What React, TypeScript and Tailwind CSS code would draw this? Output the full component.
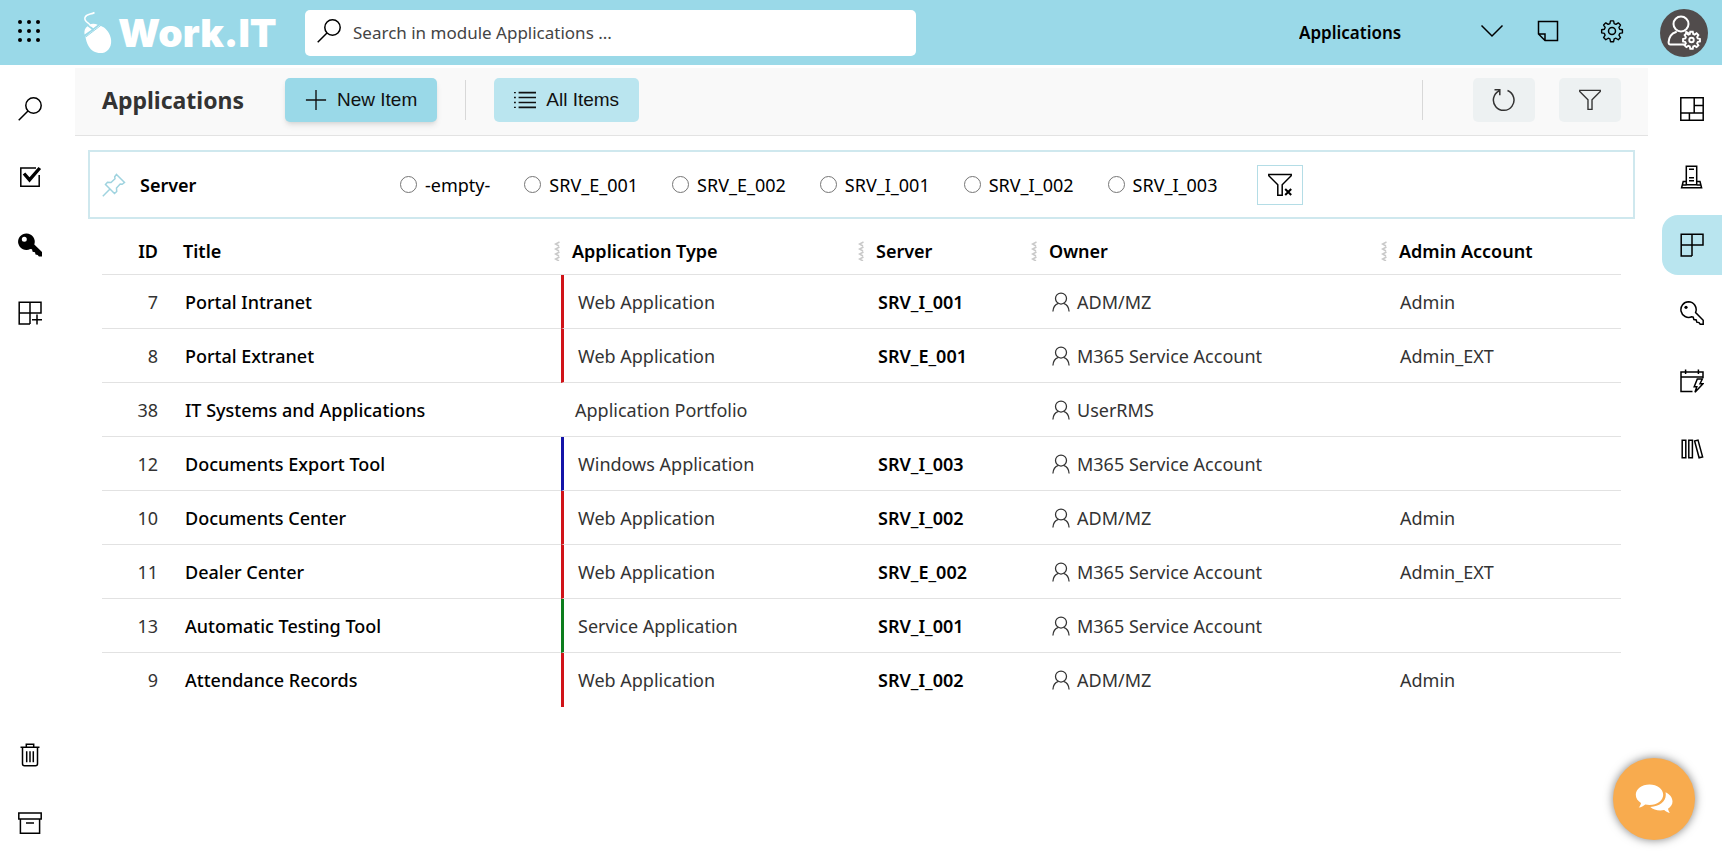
import { useState } from "react";
import type { ReactNode } from "react";
import clsx from "clsx";

type AppRow = {
  id: number;
  title: string;
  type: string;
  server: string;
  owner: string;
  admin: string;
};

const ROWS: AppRow[] = [
  { id: 7, title: "Portal Intranet", type: "Web Application", server: "SRV_I_001", owner: "ADM/MZ", admin: "Admin" },
  { id: 8, title: "Portal Extranet", type: "Web Application", server: "SRV_E_001", owner: "M365 Service Account", admin: "Admin_EXT" },
  { id: 38, title: "IT Systems and Applications", type: "Application Portfolio", server: "", owner: "UserRMS", admin: "" },
  { id: 12, title: "Documents Export Tool", type: "Windows Application", server: "SRV_I_003", owner: "M365 Service Account", admin: "" },
  { id: 10, title: "Documents Center", type: "Web Application", server: "SRV_I_002", owner: "ADM/MZ", admin: "Admin" },
  { id: 11, title: "Dealer Center", type: "Web Application", server: "SRV_E_002", owner: "M365 Service Account", admin: "Admin_EXT" },
  { id: 13, title: "Automatic Testing Tool", type: "Service Application", server: "SRV_I_001", owner: "M365 Service Account", admin: "" },
  { id: 9, title: "Attendance Records", type: "Web Application", server: "SRV_I_002", owner: "ADM/MZ", admin: "Admin" },
];

const TYPE_BORDER: Record<string, string> = {
  "Web Application": "border-l-3 border-l-[#d01318]",
  "Windows Application": "border-l-3 border-l-[#1414a8]",
  "Service Application": "border-l-3 border-l-[#0c7d1c]",
};

const SERVERS = ["-empty-", "SRV_E_001", "SRV_E_002", "SRV_I_001", "SRV_I_002", "SRV_I_003"];

function Icon({ children, className = "size-6" }: { children: ReactNode; className?: string }) {
  return (
    <svg
      viewBox="0 0 24 24"
      fill="none"
      stroke="currentColor"
      strokeWidth="1.5"
      className={clsx("shrink-0", className)}
      aria-hidden
    >
      {children}
    </svg>
  );
}

function SearchIcon() {
  return (
    <Icon>
      <circle cx="15.5" cy="8.5" r="7.7" />
      <path d="M10 14 0.7 23.3" />
    </Icon>
  );
}

function TaskIcon() {
  return (
    <Icon>
      <path d="M18 3H2.8v18.2h18.4V10" />
      <path d="m6 8.5 5.5 6.3L21.8 3" strokeWidth="3.4" />
    </Icon>
  );
}

function SolidKeyIcon() {
  return (
    <Icon>
      <path
        d="M8.6.5a8.2 8.2 0 1 0 3.6 15.4l1.8.4.6 2.4 2.4.5.5 2.3 2.2.5 1.2 1.6h3.4v-4.4l-8-7.8A8.2 8.2 0 0 0 8.6.5ZM6.3 3.8a2.5 2.5 0 1 1 0 5 2.5 2.5 0 0 1 0-5Z"
        fill="currentColor"
        fillRule="evenodd"
        stroke="none"
      />
    </Icon>
  );
}

function AddBlockIcon() {
  return (
    <Icon>
      <path d="M12 23H1.2V1.2H23v10.9H1.2M12 1.2V23M19 13.5v10M14 18.7h10" />
    </Icon>
  );
}

function TrashIcon() {
  return (
    <Icon>
      <path d="M2.5 4.2h19M8.3 4V1.2h7.4V4M4.5 4.5v16.3a2 2 0 0 0 2 2h11a2 2 0 0 0 2-2V4.5M8.7 8.2v11M12 8.2v11M15.3 8.2v11" />
    </Icon>
  );
}

function ArchiveIcon() {
  return (
    <Icon>
      <path d="M.8 2h22.4v6H.8zM2.4 8v14.3h19.2V8M8 12h8" />
    </Icon>
  );
}

function DashboardIcon() {
  return (
    <Icon>
      <path d="M.8.8h22.4v22.4H.8zM14.2.8v15.3M.8 16.1h22.4M14.2 8.4h9M9.4 16.1v7.1" />
    </Icon>
  );
}

function ServerIcon() {
  return (
    <Icon>
      <path d="M6.3 1.3h10.4v18.4H6.3zM9 4.3h5M9 12.7h5M9 15.8h5M6 16.5H3.2L1.6 22.7h20L20 16.5h-3M2.2 20h4.4M16.7 20H21" />
    </Icon>
  );
}

function BlocksIcon() {
  return (
    <Icon>
      <path d="M12 23H1.2V1.2H23v10.9H1.2M12 1.2V23" />
    </Icon>
  );
}

function KeyIcon() {
  return (
    <Icon>
      <path d="M8.5.8a7.8 7.8 0 1 0 3.2 15l1.5.4.7 2.3 2.3.4.6 2.3 2.2.4 1.2 1.6h3v-4l-7.6-7.7A7.8 7.8 0 0 0 8.5.8Z" />
      <circle cx="6" cy="6.3" r="1.6" fill="currentColor" stroke="none" />
    </Icon>
  );
}

function CalendarBoltIcon() {
  return (
    <Icon>
      <path d="M12.5 22.5H1V3h22v6M1 8h22M5.6.5V5M18.4.5V5" />
      <path d="M17.3 10h5l-2.3 4.7h3L15 23.3l1.8-5.6h-2.6z" />
    </Icon>
  );
}

function BooksIcon() {
  return (
    <Icon>
      <path d="M2.2 3.2h3.6v17.6H2.2zM8.8 3.2h3.6v17.6H8.8zM14.6 4l3.4-.9 4.6 16.8-3.5.9z" />
    </Icon>
  );
}

function FunnelIcon({ className, cleared = false }: { className?: string; cleared?: boolean }) {
  return (
    <Icon className={className}>
      <path d="M.8 1.5h22.4v1.3l-9 9v10.4H9.8V11.8l-9-9z" />
      {cleared && <path d="m17.2 16 6 6M23.2 16l-6 6" strokeWidth="2" />}
    </Icon>
  );
}

function UserIcon() {
  return (
    <Icon className="size-5">
      <circle cx="12" cy="7.8" r="6.6" />
      <path d="M2.3 23.5c.3-5.3 3-8.6 6.6-9.8M21.7 23.5c-.3-5.3-3-8.6-6.6-9.8" />
    </Icon>
  );
}

const GEAR_PATH =
  "M10.3 1h3.4l.6 3 1.9.8 2.6-1.7 2.4 2.4-1.7 2.6.8 1.9 3 .6v3.4l-3 .6-.8 1.9 1.7 2.6-2.4 2.4-2.6-1.7-1.9.8-.6 3h-3.4l-.6-3-1.9-.8-2.6 1.7-2.4-2.4 1.7-2.6-.8-1.9-3-.6v-3.4l3-.6.8-1.9-1.7-2.6 2.4-2.4 2.6 1.7 1.9-.8z";

function Logo() {
  return (
    <a href="#home" className="flex w-52 shrink-0 items-center gap-1 text-white" aria-label="Work.IT home">
      <svg viewBox="0 0 32 44" className="h-11 w-8 shrink-0" aria-hidden>
        <path d="M8.5 15.5C9 12 1.5 11.5 3 6.5 4.5 2.5 9 3.8 12.5 1.5" fill="none" stroke="#fff" strokeWidth="1.5" />
        <path d="M3.5 25.5 17.5 14.5c4 .8 8.5 4.7 10.5 10 2.8 7 .5 14.5-5.5 17-6.5 2-13-1-16-6.5-1.6-3-2.8-6.5-3-9.5Z" fill="#fff" />
        <path d="M2.5 23.5c-.5-4 .5-6.5 3-8.3l4.3 3.2zM7 14c2.5-1.5 5.5-1.5 8.7-.2L11.3 17.3z" fill="#fff" />
        <path d="M4 25.8 20 13.5M11.5 20 7 14.5" fill="none" stroke="#9ad9e8" strokeWidth="1" />
      </svg>
      <span className="font-['Inter'] text-[39px] leading-none font-black">Work.IT</span>
    </a>
  );
}

function Header() {
  return (
    <header className="flex h-[65px] items-center bg-[#9ad9e8]">
      <button className="flex w-[82px] shrink-0 pb-1 pl-[17px]" aria-label="App launcher">
        <svg viewBox="0 0 24 24" className="size-6" fill="currentColor" aria-hidden>
          {[3, 12, 21].map((y) => [3, 12, 21].map((x) => <circle key={`${x}-${y}`} cx={x} cy={y} r="2" />))}
        </svg>
      </button>
      <Logo />
      <label className="ml-[15px] flex h-[46px] w-[611px] items-center gap-3 rounded-[5px] bg-white pl-3">
        <span className="pb-1">
          <SearchIcon />
        </span>
        <input
          type="text"
          aria-label="Search"
          placeholder="Search in module Applications ..."
          className="min-w-0 flex-1 bg-transparent text-[17px] outline-none placeholder:text-[#444]"
        />
      </label>
      <div className="ml-auto flex items-center pr-3.5">
        <div className="relative">
          <select className="w-[209px] appearance-none bg-transparent text-[17px] font-semibold outline-none" aria-label="Module">
            <option>Applications</option>
          </select>
          <span className="pointer-events-none absolute inset-y-0 right-1 flex items-center pb-1">
            <Icon>
              <path d="m1.5 6.5 10.5 10.5L22.5 6.5" />
            </Icon>
          </span>
        </div>
        <button className="ml-7 pb-1" aria-label="Notes">
          <Icon>
            <path d="M2.5 2.5h19v19H9L2.5 15zM2.5 15H9v6.5" />
          </Icon>
        </button>
        <button className="ml-10 pb-1" aria-label="Settings">
          <Icon>
            <path d={GEAR_PATH} transform="translate(1 1) scale(.92)" strokeLinejoin="round" />
            <circle cx="12" cy="12" r="3.5" />
          </Icon>
        </button>
        <button className="ml-9 flex size-12 items-center justify-center rounded-full bg-[#514c4c] text-white" aria-label="Account">
          <svg viewBox="0 0 34 36" className="h-9 w-[34px]" fill="none" stroke="currentColor" strokeWidth="2" aria-hidden>
            <circle cx="14" cy="9" r="7.5" />
            <path d="M17.5 29.5H3.5c-1.5 0-2-1-1.9-2.4C2 22 4.5 18.5 9 17M19 17l2 1" strokeLinecap="round" />
            <g transform="translate(15.5 16) scale(.75)">
              <path d={GEAR_PATH} strokeWidth="2.5" />
              <circle cx="12" cy="12" r="3" strokeWidth="2.5" />
            </g>
          </svg>
        </button>
      </div>
    </header>
  );
}

function RailButton({ label, active, children }: { label: string; active?: boolean; children: ReactNode }) {
  return (
    <button
      aria-label={label}
      className={clsx("flex h-15 w-15 items-center justify-center", active && "rounded-l-2xl bg-[#b9e5ef]")}
    >
      {children}
    </button>
  );
}

function Toolbar() {
  return (
    <div className="flex h-[68px] items-center border-b border-[#e3e3e3] bg-[#f9f9f9] px-[27px] pb-[3px]">
      <h1 className="w-[183px] text-[23px] font-bold text-[#333]">Applications</h1>
      <button className="flex h-11 items-center gap-2.5 rounded-[5px] bg-[#9ad9e8] px-5 font-['Liberation_Sans'] text-[19px] text-[#111] shadow-md">
        <Icon className="size-[22px]">
          <path d="M12 1v22M1 12h22" />
        </Icon>
        New Item
      </button>
      <div className="mx-7 h-10 w-px bg-[#d8d8d8]" />
      <button className="flex h-11 items-center gap-2.5 rounded-[5px] bg-[#bae5ef] px-5 font-['Liberation_Sans'] text-[19px] text-[#111]">
        <Icon className="size-[22px]">
          <path d="M5 4h19M5 9.3h19M5 14.7h19M5 20h19" strokeWidth="1.8" />
          <path d="M0 4h2M0 9.3h2M0 14.7h2M0 20h2" />
        </Icon>
        All Items
      </button>
      <div className="mr-[50px] ml-auto h-10 w-px bg-[#d8d8d8]" />
      <button className="mr-6 flex h-11 w-[62px] items-center justify-center rounded-[5px] bg-[#edf1f2] text-[#333]" aria-label="Refresh">
        <Icon>
          <path d="M15.5 2.5A10.3 10.3 0 1 1 7.2 2.8M2.5 1.8h5.3v5.4" />
        </Icon>
      </button>
      <button className="flex h-11 w-[62px] items-center justify-center rounded-[5px] bg-[#edf1f2] text-[#333]" aria-label="Filter">
        <FunnelIcon className="size-[22px]" />
      </button>
    </div>
  );
}

function ServerFilter() {
  const [selected, setSelected] = useState<string | null>(null);

  return (
    <div
      role="radiogroup"
      aria-labelledby="server-filter"
      className="mx-[13px] mt-3.5 flex h-[69px] items-center border-2 border-[#cfe8ee] pl-3"
    >
      <Icon className="size-6 text-[#9fd3df]">
        <path d="m14.5 1.5 8 8-2.3 1.8-2-.3-3.7 4 .2 3.5-2.2 2-9-9 2-2.2 3.5.2 4-3.7-.3-2zM7.5 16.5.8 23.2" />
      </Icon>
      <span id="server-filter" className="ml-3.5 w-[260px] font-semibold">
        Server
      </span>
      <div className="flex items-center gap-[34px]">
        {SERVERS.map((server) => (
          <label key={server} className="flex items-center gap-2">
            <input
              type="radio"
              name="server"
              checked={selected === server}
              onChange={() => setSelected(server)}
              className="size-[17px] appearance-none rounded-full border border-[#767676] bg-white checked:border-5"
            />
            {server}
          </label>
        ))}
      </div>
      <button
        className="ml-10 flex h-10 w-[46px] items-center justify-center border border-[#b4dde6]"
        aria-label="Clear filter"
        onClick={() => setSelected(null)}
      >
        <FunnelIcon cleared />
      </button>
    </div>
  );
}

function HeadCell({ children, grip }: { children: ReactNode; grip?: boolean }) {
  return (
    <th className="pl-[11px] font-semibold">
      <div className="flex items-center justify-between">
        {children}
        {grip && (
          <svg viewBox="0 0 6 20" className="mr-px h-5 w-1.5" fill="none" stroke="#c9c9c9" strokeWidth="1.5" aria-hidden>
            <path d="m5.5 1-4 2 3.5 2M5.5 6l-4 2 3.5 2M5.5 11l-4 2 3.5 2M5.5 16l-4 2 3.5 2" />
          </svg>
        )}
      </div>
    </th>
  );
}

function ApplicationsTable() {
  return (
    <div className="px-[27px]">
      <table className="w-full table-fixed border-separate border-spacing-0 text-left">
        <colgroup>
          <col className="w-[70px]" />
          <col className="w-[389px]" />
          <col className="w-[304px]" />
          <col className="w-[173px]" />
          <col className="w-[350px]" />
          <col />
        </colgroup>
        <thead>
          <tr className="h-14 *:border-b *:border-[#e2e2e2] *:pt-2">
            <th className="pr-3.5 text-right font-semibold">ID</th>
            <HeadCell grip>Title</HeadCell>
            <HeadCell grip>Application Type</HeadCell>
            <HeadCell grip>Server</HeadCell>
            <HeadCell grip>Owner</HeadCell>
            <HeadCell>Admin Account</HeadCell>
          </tr>
        </thead>
        <tbody>
          {ROWS.map((row) => (
            <tr key={row.id} className="h-[54px] *:border-b *:border-b-[#e2e2e2] last:*:border-b-0">
              <td className="pr-3.5 text-right text-[#333]">{row.id}</td>
              <td className="pl-[13px] font-medium">{row.title}</td>
              <td className={clsx("pl-3.5 text-[#333]", TYPE_BORDER[row.type])}>{row.type}</td>
              <td className="pl-[13px] font-semibold">{row.server}</td>
              <td className="pl-[13px] text-[#333]">
                <span className="flex items-center gap-1.5">
                  <UserIcon />
                  {row.owner}
                </span>
              </td>
              <td className="pl-3 text-[#333]">{row.admin}</td>
            </tr>
          ))}
        </tbody>
      </table>
    </div>
  );
}

export default function App() {
  return (
    <div className="flex min-h-screen flex-col bg-white font-['Noto_Sans',sans-serif] text-[18px] leading-6 text-black">
      <Header />
      <div className="flex flex-1">
        <nav className="flex w-[75px] shrink-0 flex-col gap-2 pt-3.5 pb-[13px]" aria-label="Tools">
          <RailButton label="Search">
            <SearchIcon />
          </RailButton>
          <RailButton label="Tasks">
            <TaskIcon />
          </RailButton>
          <RailButton label="Passwords">
            <SolidKeyIcon />
          </RailButton>
          <RailButton label="Add module">
            <AddBlockIcon />
          </RailButton>
          <div className="mt-auto flex flex-col gap-2">
            <RailButton label="Recycle bin">
              <TrashIcon />
            </RailButton>
            <RailButton label="Archive">
              <ArchiveIcon />
            </RailButton>
          </div>
        </nav>

        <main className="min-w-0 flex-1 pt-[3px]">
          <Toolbar />
          <ServerFilter />
          <ApplicationsTable />
        </main>

        <nav className="flex w-[74px] shrink-0 flex-col items-end gap-2 pt-3.5" aria-label="Modules">
          <RailButton label="Dashboard">
            <DashboardIcon />
          </RailButton>
          <RailButton label="Servers">
            <ServerIcon />
          </RailButton>
          <RailButton label="Applications" active>
            <BlocksIcon />
          </RailButton>
          <RailButton label="Accounts">
            <KeyIcon />
          </RailButton>
          <RailButton label="Events">
            <CalendarBoltIcon />
          </RailButton>
          <RailButton label="Library">
            <BooksIcon />
          </RailButton>
        </nav>
      </div>

      <button
        className="fixed right-[27px] bottom-[26px] flex size-[82px] items-center justify-center rounded-full bg-[#f8ab4e] text-white shadow-[0_0_10px_rgba(0,0,0,0.5)]"
        aria-label="Chat"
      >
        <svg viewBox="0 0 38 30" className="h-[30px] w-[38px]" fill="currentColor" aria-hidden>
          <path d="M14.5.5C6.7.5.8 5 .8 10.8c0 3.4 2 6.3 5.2 8.2-.4 2-1.2 3.4-2.3 4.6 2.6-.3 4.8-1.4 6.6-3 1.3.3 2.7.4 4.2.4 7.8 0 13.7-4.5 13.7-10.2S22.3.5 14.5.5Z" />
          <path d="M30.5 8.2c.2.9.3 1.7.3 2.6 0 6.7-6.5 11.9-15.5 12.2 2.4 2.2 6 3.5 10 3.5 1.4 0 2.7-.2 3.9-.4 1.5 1.4 3.3 2.4 5.6 2.8-.9-1.2-1.5-2.5-1.8-4.2 2.8-1.7 4.5-4.2 4.5-7.2 0-4-2.8-7.5-7-9.3Z" />
        </svg>
      </button>
    </div>
  );
}
